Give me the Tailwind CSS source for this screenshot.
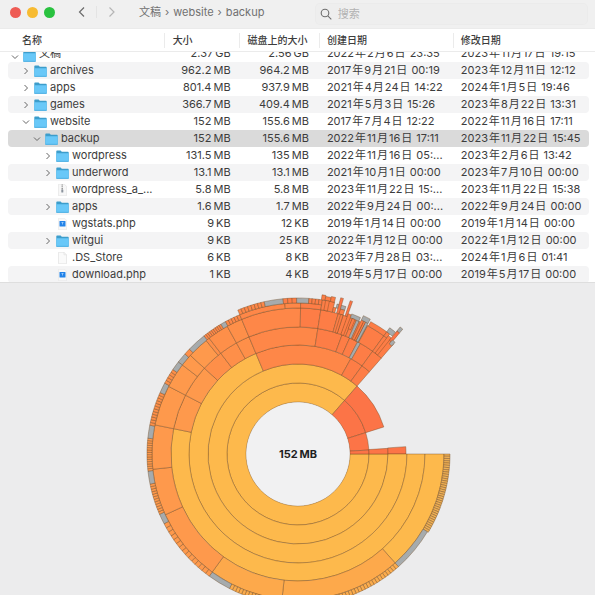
<!DOCTYPE html>
<html lang="zh-CN">
<head>
<meta charset="utf-8">
<meta name="viewport" content="width=device-width, initial-scale=1">
<title>backup</title>
<script src="https://cdn.jsdelivr.net/npm/@tailwindcss/browser@4"></script>
</head>
<body class="flex h-screen flex-col overflow-hidden bg-[#ececed] font-['Inter','Noto_Sans_CJK_SC',sans-serif] text-[11px] text-[#3c3c3c]">
<svg class="hidden" aria-hidden="true">
  <symbol id="folder" viewBox="0 0 13 12"><path d="M.3 1.2Q.3.4 1.1.4H4.6L5.8 1.7H12Q12.7 1.7 12.7 2.5V11Q12.7 11.7 12 11.7H1Q.3 11.7.3 11Z" fill="#3d9dcb"/><path d="M.3 3.2H12.7V11Q12.7 11.7 12 11.7H1Q.3 11.7.3 11Z" fill="#69c8f8"/><path d="M.5 11.3H12.5" stroke="#4daee0" stroke-width=".7"/></symbol>
  <symbol id="right" viewBox="0 0 8 10"><path d="M2.500 2 5.500 5 2.500 8" fill="none" stroke="#666" stroke-width="1"/></symbol>
  <symbol id="down" viewBox="0 0 8 10"><path d="M1 3.500 4 6.500 7 3.500" fill="none" stroke="#666" stroke-width="1"/></symbol>
  <symbol id="php" viewBox="0 0 13 12"><path d="M2.500.3H8.500L10.500 2.300V11.700H2.500Z" fill="#f8f8f8" stroke="#e2e2e2" stroke-width=".5"/><rect x="3.500" y="3" width="6" height="5.500" rx=".6" fill="#2383e8"/><path d="M5.500 4.500H7.500M6.500 4.500V6.500" stroke="#a8d2fb" stroke-width=".8"/></symbol>
  <symbol id="zip" viewBox="0 0 13 12"><path d="M2.500.3H8.500L10.500 2.300V11.700H2.500Z" fill="#f7f7f7" stroke="#ddd" stroke-width=".5"/><path d="M6.200.5V6" stroke="#888" stroke-width="1.300" stroke-dasharray="1 .7"/><rect x="5.300" y="5.500" width="2" height="3" rx=".5" fill="#8b939d"/></symbol>
  <symbol id="file" viewBox="0 0 13 12"><path d="M2.500.3H8L10.500 2.800V11.700H2.500Z" fill="#fafafa" stroke="#ddd" stroke-width=".6"/><path d="M8 .3V2.800H10.500" fill="none" stroke="#ddd" stroke-width=".6"/></symbol>
</svg>

<header class="flex h-7 shrink-0 items-center bg-[#f0f0f0] pr-2 pl-2.5 text-[#707070]">
  <div class="flex w-[58px] shrink-0 gap-1.5 pb-1">
    <button aria-label="关闭" class="size-[11px] rounded-full bg-[#ee5b54]"></button>
    <button aria-label="最小化" class="size-[11px] rounded-full bg-[#f7bb32]"></button>
    <button aria-label="缩放" class="size-[11px] rounded-full bg-[#29c23f]"></button>
  </div>
  <div class="flex w-[71px] shrink-0 items-center gap-2 pb-1 pl-2">
    <button aria-label="后退"><svg class="h-3 w-3" viewBox="0 0 12 12" fill="none" stroke="#6b6b6b" stroke-width="1.200"><path d="M8 1.500 3.500 6 8 10.500"/></svg></button>
    <span class="h-3 w-px bg-[#e4e4e4]"></span>
    <button aria-label="前进"><svg class="h-3 w-3" viewBox="0 0 12 12" fill="none" stroke="#b5b5b5" stroke-width="1.200"><path d="M4.500 1.500 9 6 4.500 10.500"/></svg></button>
  </div>
  <nav class="flex min-w-0 grow items-center gap-1 pb-1 whitespace-nowrap">
    <a href="#">文稿</a><span>›</span><a href="#">website</a><span>›</span><a href="#">backup</a>
  </nav>
  <label class="flex h-5 w-[47%] shrink-0 items-center gap-1.5 rounded bg-[#eeeeee] pl-1 ring-1 ring-[#ebebeb]">
    <svg class="size-3 shrink-0" viewBox="0 0 12 12" fill="none" stroke="#6e6e6e" stroke-width="1.100"><circle cx="5" cy="5" r="3.800"/><path d="M7.800 7.800 11.300 11.300"/></svg>
    <input type="text" aria-label="搜索" placeholder="搜索" class="min-w-0 grow bg-transparent outline-none placeholder:text-[#b2b2b2]">
  </label>
</header>

<main class="flex min-h-0 grow flex-col">
  <div class="h-[254px] shrink-0 overflow-hidden bg-white">
    <table class="w-full table-fixed border-separate border-spacing-0 whitespace-nowrap">
      <colgroup><col class="w-[27.5%]"><col class="w-[12.600%]"><col class="w-[13.500%]"><col class="w-[22.500%]"><col></colgroup>
      <thead class="text-left text-[10px]">
        <tr class="h-6">
          <th class="border-y border-[#ebebeb] p-0 pl-[22px] font-medium">名称</th>
          <th class="border-y border-[#ebebeb] p-0 font-medium"><div class="border-l border-[#ebebeb] pl-2">大小</div></th>
          <th class="border-y border-[#ebebeb] p-0 font-medium"><div class="border-l border-[#ebebeb] pl-2">磁盘上的大小</div></th>
          <th class="border-y border-[#ebebeb] p-0 font-medium"><div class="border-l border-[#ebebeb] pl-[7px]">创建日期</div></th>
          <th class="border-y border-[#ebebeb] p-0 font-medium"><div class="border-l border-[#ebebeb] pl-[7px]">修改日期</div></th>
        </tr>
      </thead>
      <tbody id="rows"></tbody>
    </table>
  </div>
  <div class="min-h-0 grow overflow-hidden border-t border-[#dedede]">
    <svg id="chart" class="mx-auto block aspect-[595/312] w-full" viewBox="0 283 595 312" role="img" aria-label="152 MB"></svg>
  </div>
</main>

<script>
// name, depth, arrow, icon, size, size on disk, created, modified
const files = [
  ['文稿', 0, 'down', 'folder', '2.37 GB', '2.56 GB', '2022年2月6日 23:35', '2023年11月17日 19:15'],
  ['archives', 1, 'right', 'folder', '962.2 MB', '964.2 MB', '2017年9月21日 00:19', '2023年12月11日 12:12'],
  ['apps', 1, 'right', 'folder', '801.4 MB', '937.9 MB', '2021年4月24日 14:22', '2024年1月5日 19:46'],
  ['games', 1, 'right', 'folder', '366.7 MB', '409.4 MB', '2021年5月3日 15:26', '2023年8月22日 13:31'],
  ['website', 1, 'down', 'folder', '152 MB', '155.6 MB', '2017年7月4日 12:22', '2022年11月16日 17:11'],
  ['backup', 2, 'down', 'folder', '152 MB', '155.6 MB', '2022年11月16日 17:11', '2023年11月22日 15:45'],
  ['wordpress', 3, 'right', 'folder', '131.5 MB', '135 MB', '2022年11月16日 05:...', '2023年2月6日 13:42'],
  ['underword', 3, 'right', 'folder', '13.1 MB', '13.1 MB', '2021年10月1日 00:00', '2023年7月10日 00:00'],
  ['wordpress_a_...', 3, '', 'zip', '5.8 MB', '5.8 MB', '2023年11月22日 15:...', '2023年11月22日 15:38'],
  ['apps', 3, 'right', 'folder', '1.6 MB', '1.7 MB', '2022年9月24日 00:...', '2022年9月24日 00:00'],
  ['wgstats.php', 3, '', 'php', '9 KB', '12 KB', '2019年1月14日 00:00', '2019年1月14日 00:00'],
  ['witgui', 3, 'right', 'folder', '9 KB', '25 KB', '2022年1月12日 00:00', '2022年1月12日 00:00'],
  ['.DS_Store', 3, '', 'file', '6 KB', '8 KB', '2023年7月28日 03:...', '2024年1月6日 01:41'],
  ['download.php', 3, '', 'php', '1 KB', '4 KB', '2019年5月17日 00:00', '2019年5月17日 00:00']
];
const indent = ['pl-[3px]', 'pl-[14px]', 'pl-[25px]', 'pl-[36px]'];
document.getElementById('rows').innerHTML = files.map((f, i) => {
  const [name, depth, arrow, icon, ...v] = f;
  const bg = name === 'backup' ? 'bg-[#dadada]' : i % 2 ? 'bg-[#f4f4f5]' : '';
  // the first row is partly scrolled under the header
  const h = i ? 'h-[17px] items-center' : 'h-[10px] items-end overflow-hidden';
  const unit = s => s.replace(' ', '&#8201;');
  const date = s => s.replace(/[年月日]/g, '<span class="mx-px">$&</span>');
  return `<tr>
    <td class="p-0 pl-2"><div class="flex ${h} ${bg} ${indent[depth]} rounded-l">
      <svg class="mr-1 h-[10px] w-2 shrink-0">${arrow ? `<use href="#${arrow}"/>` : ''}</svg>
      <svg class="mr-[3px] h-3 w-[13px] shrink-0"><use href="#${icon}"/></svg><span class="leading-[17px]">${name}</span></div></td>
    <td class="p-0"><div class="flex ${h} ${bg} justify-end pr-2"><span class="leading-[17px]">${unit(v[0])}</span></div></td>
    <td class="p-0"><div class="flex ${h} ${bg} justify-end pr-2.5"><span class="leading-[17px]">${unit(v[1])}</span></div></td>
    <td class="p-0"><div class="flex ${h} ${bg} pl-2"><span class="leading-[17px]">${date(v[2])}</span></div></td>
    <td class="p-0 pr-1.5"><div class="flex ${h} ${bg} rounded-r pl-2"><span class="leading-[17px]">${date(v[3])}</span></div></td></tr>`;
}).join('');

// Sunburst: angles in degrees clockwise from east
const CX = 298, CY = 454;
const Y = '#fdb94c', A = '#fda94b', O = '#fe994c', P = '#fe8f49', Q = '#fe8748', R = '#fd7d46', T = '#fc7447', G = '#a6abad';
let out = '';
const pt = (r, a) => (CX + r * Math.cos(a * Math.PI / 180)).toFixed(2) + ' ' + (CY + r * Math.sin(a * Math.PI / 180)).toFixed(2);
function seg(a0, a1, r0, r1, c) {
  const big = a1 - a0 > 180 ? 1 : 0;
  out += `<path d="M${pt(r0, a0)}L${pt(r1, a0)}A${r1} ${r1} 0 ${big} 1 ${pt(r1, a1)}L${pt(r0, a1)}A${r0} ${r0} 0 ${big} 0 ${pt(r0, a0)}Z" fill="${c}"/>`;
}
function ring(r0, r1, stops) {
  for (let i = 0; i < stops.length - 2; i += 2) seg(stops[i], stops[i + 2], r0, r1, stops[i + 1]);
}
function ticks(a0, a1, r0, r1, n, c) {
  const d = (a1 - a0) / n;
  for (let i = 0; i < n; i++) seg(a0 + i * d, a0 + (i + 1) * d, r0, r1, c);
}
ring(52, 71, [0, Y, 311, T, 342.5, T, 356.8, T, 360]);
ring(71, 90, [0, Y, 311, T, 342.5]);
seg(356.4, 360, 71, 90, T);
seg(356.1, 360, 90, 108, T);
ring(90, 109, [0, Y, 247.3, Q, 299, R, 306, R, 311]);
ring(109, 127, [0, Y, 191.5, O, 207.6, O, 222.5, P, 232.5, P, 241, P, 247.3, Q, 279, R, 290.3, R, 294, R, 298, G, 299.5, R, 306, R, 311]);
ring(127, 146, [0, Y, 48.3, A, 96.3, A, 126, O, 155.4, O, 174, O, 191.5, O, 207.6, O, 217.6, O, 222.5, O, 231, P, 232.5, P, 241, P, 247.3, Q, 271, R, 279, R, 286, R, 288, R, 290, R, 292, R, 293.6, G, 294.8, R, 297.2, G, 298.5, R, 306, R, 311]);
ticks(0, 31, 146, 152, 36, '#efb055');
seg(31, 48.3, 146, 151, G);
ticks(48.3, 117, 146, 151, 54, '#fbac4d');
seg(117, 126, 146, 151, G);
ticks(126, 152.5, 146, 151, 15, O);
seg(152.5, 156.5, 146, 151, G);
ticks(156.5, 168.5, 146, 151, 12, O);
seg(168.5, 173.5, 146, 151, G);
ticks(173.5, 186, 146, 151, 14, O);
seg(186, 191, 146, 151, G);
ticks(191, 204, 146, 151, 12, P);
seg(204, 208, 146, 151, G);
ticks(208, 214, 146, 151, 5, P);
seg(214, 217.6, 146, 151, G);
seg(217.6, 221.5, 146, 151, G);
seg(221.5, 224, 146, 151, P);
seg(224, 231.5, 146, 151, G);
ticks(231.5, 239.3, 146, 151, 9, Q);
seg(239.3, 241.3, 146, 151, G);
ticks(241.3, 247.3, 146, 151, 5, Q);
ring(146, 151, [247.3, Q, 265, Q, 271, R, 279]);
ticks(247.3, 257.5, 151, 156, 8, Q);
seg(257.5, 264.5, 151, 156, G);
ticks(264.5, 269.5, 151, 156, 3, R);
seg(269.5, 274, 151, 156, G);
ticks(274, 279, 151, 156, 4, R);
// uneven spikes of the deeper levels
const spikes = [
  [279, 283.6, 146, 156, R], [278.6, 280, 156, 161, R], [280, 282, 156, 160, R], [282, 283.5, 156, 161, R],
  [280.2, 281.6, 146, 156, R], [283.6, 284.6, 146, 151, R], [284.6, 288, 151, 155, G], [286.2, 288, 146, 151, R],
  [285.3, 286.3, 146, 162, T], [288.8, 289.7, 146, 162, T], [287, 288, 127, 146, R], [289.7, 291, 127, 149, R],
  [291, 294.6, 146, 150, G], [291.8, 293, 135, 146, R],
  [295.3, 298.2, 148, 153, G], [295.3, 296.4, 127, 148, R], [296.4, 297.2, 127, 148, R], [297.2, 298.2, 127, 148, G],
  [298.8, 306, 146, 151, R], [306, 307.4, 146, 151, R], [307.4, 308.8, 127, 149, R],
  [306, 308.6, 151, 156, G], [308.8, 310, 146, 158, T], [308.8, 310, 158, 163, G],
  [309.6, 311, 143, 148, G]
];
spikes.forEach(s => seg(...s));
document.getElementById('chart').innerHTML =
  `<g stroke="#6b4520" stroke-opacity=".65" stroke-width=".6">${out}</g>
   <circle cx="${CX}" cy="${CY}" r="51.500" fill="#f1f1f2"/>
   <text x="${CX}" y="458" text-anchor="middle" class="fill-[#1f1f1f] text-[11px] font-bold">152&#8201;MB</text>`;
</script>
</body>
</html>
